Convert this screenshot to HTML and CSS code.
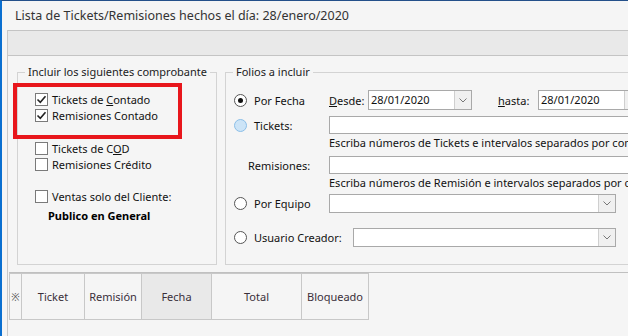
FILE: index.html
```html
<!DOCTYPE html>
<html lang="es">
<head>
  <meta charset="UTF-8">
  <title>Lista de Tickets/Remisiones</title>
  <link rel="stylesheet" href="styles.css">
</head>
<body>

  <div class="ventana">
    <div class="titulo">Lista de Tickets/Remisiones hechos el día: 28/enero/2020</div>

    <div class="panel">
      <div class="barra"></div>

      <div class="filtros">
        <fieldset class="grupo grupo-tipos">
          <legend>Incluir los siguientes comprobante</legend>

          <div class="marcado">
            <div class="check"><span class="caja"><svg viewBox="0 0 13 13" width="13" height="13"><path d="M2.5 6.5l2.8 2.8 5.2-6" fill="none" stroke="#222" stroke-width="1.6"/></svg></span><span>Tickets de <u>C</u>ontado</span></div>
            <div class="check"><span class="caja"><svg viewBox="0 0 13 13" width="13" height="13"><path d="M2.5 6.5l2.8 2.8 5.2-6" fill="none" stroke="#222" stroke-width="1.6"/></svg></span><span>Remisiones Contado</span></div>
          </div>

          <div class="check check-cod"><span class="caja"></span><span>Tickets de C<u>O</u>D</span></div>
          <div class="check"><span class="caja"></span><span>Remisiones Crédito</span></div>

          <div class="check check-cliente"><span class="caja"></span><span>Ventas solo del Cliente:</span></div>
          <div class="cliente">Publico en General</div>
        </fieldset>

        <fieldset class="grupo grupo-folios">
          <legend>Folios a incluir</legend>

          <div class="fila fila-fecha">
            <div class="opcion"><span class="radio activo"></span><span>Por Fecha</span></div>
            <span class="etiqueta"><u>D</u>esde:</span>
            <div class="combo fecha"><span class="valor">28/01/2020</span><span class="boton"><svg viewBox="0 0 8 5" width="8" height="5"><path d="M0.5 0.5l3.5 3.5 3.5-3.5" fill="none" stroke="#777" stroke-width="1"/></svg></span></div>
            <span class="etiqueta etiqueta-hasta"><u>h</u>asta:</span>
            <div class="combo fecha"><span class="valor">28/01/2020</span><span class="boton"><svg viewBox="0 0 8 5" width="8" height="5"><path d="M0.5 0.5l3.5 3.5 3.5-3.5" fill="none" stroke="#777" stroke-width="1"/></svg></span></div>
          </div>

          <div class="fila fila-texto">
            <div class="opcion"><span class="radio hover"></span><span>Tickets:</span></div>
            <div class="caja-texto"></div>
          </div>
          <div class="ayuda">Escriba números de Tickets e intervalos separados por comas</div>

          <div class="fila fila-texto fila-remisiones">
            <div class="opcion opcion-remisiones">Remisiones:</div>
            <div class="caja-texto"></div>
          </div>
          <div class="ayuda">Escriba números de Remisión e intervalos separados por comas</div>

          <div class="fila fila-combo fila-equipo">
            <div class="opcion"><span class="radio"></span><span>Por Equipo</span></div>
            <div class="combo lista"><span class="valor"></span><span class="boton"><svg viewBox="0 0 8 5" width="8" height="5"><path d="M0.5 0.5l3.5 3.5 3.5-3.5" fill="none" stroke="#777" stroke-width="1"/></svg></span></div>
          </div>

          <div class="fila fila-combo fila-usuario">
            <div class="opcion opcion-ancha"><span class="radio"></span><span>Usuario Creador:</span></div>
            <div class="combo lista lista-corta"><span class="valor"></span><span class="boton"><svg viewBox="0 0 8 5" width="8" height="5"><path d="M0.5 0.5l3.5 3.5 3.5-3.5" fill="none" stroke="#777" stroke-width="1"/></svg></span></div>
          </div>
        </fieldset>
      </div>

      <div class="tabla">
        <div class="encabezado">
          <div class="celda col-sel">※</div>
          <div class="celda col-ticket">Ticket</div>
          <div class="celda col-remision">Remisión</div>
          <div class="celda col-fecha">Fecha</div>
          <div class="celda col-total">Total</div>
          <div class="celda col-bloqueado">Bloqueado</div>
        </div>
      </div>
    </div>
  </div>

</body>
</html>
```

FILE: styles.css
```css
body {
  margin: 0;
  padding: 0;
  background-color: #f5f5f5;
  font-family: "Noto Sans", "Open Sans", sans-serif;
  font-size: 11px;
  color: #111;
  overflow: hidden;
}

.ventana {
  height: 336px;
  box-sizing: border-box;
  border-top: 1px solid #24508a;
  border-left: 2px solid #0a6fd0;
  background-color: #f5f5f5;
}

.titulo {
  height: 29px;
  line-height: 29px;
  padding-left: 13px;
  font-size: 12.5px;
  color: #333;
  white-space: nowrap;
}

.panel {
  margin-left: 5px;
  border-left: 1px solid #c8c8c8;
  height: 306px;
}

.barra {
  height: 24px;
  background-color: #e9e9e9;
  border-top: 1px solid #c4c4c4;
  border-bottom: 1px solid #c4c4c4;
}

.filtros {
  display: flex;
  gap: 8px;
  height: 216px;
  box-sizing: border-box;
  padding: 8px 0 0 9px;
  overflow: hidden;
}

.grupo {
  margin: 0;
  padding: 0;
  border: 1px solid #d3d3d3;
  box-sizing: border-box;
  height: 201px;
  flex-shrink: 0;
}

.grupo legend {
  margin-left: 7px;
  padding: 0 3px;
  line-height: 16px;
  color: #222;
  white-space: nowrap;
}

.grupo-tipos {
  width: 200px;
}

.grupo-folios {
  width: 440px;
}

/* casillas */
.marcado {
  margin: 3px 0 0 -5px;
  width: 143px;
  border: 4px solid #e8161c;
  padding: 4px 0 12px 18px;
}

.check {
  display: flex;
  align-items: center;
  height: 16px;
  white-space: nowrap;
}

.grupo-tipos > .check {
  padding-left: 17px;
}

.caja {
  width: 11px;
  height: 11px;
  border: 1px solid #7a7a7a;
  background: white;
  margin-right: 4px;
  position: relative;
  flex-shrink: 0;
}

.caja svg {
  position: absolute;
  left: -1px;
  top: -1px;
}

.check-cod {
  margin-top: 1px;
}

.check-cliente {
  margin-top: 16px;
}

.cliente {
  padding-left: 30px;
  margin-top: 4px;
  line-height: 16px;
  font-weight: bold;
  color: #000;
}

/* folios */
.fila {
  display: flex;
  align-items: center;
  padding-left: 8px;
  white-space: nowrap;
}

.fila-fecha {
  height: 20px;
  margin-top: 10px;
}

.fila-texto {
  height: 18px;
  margin-top: 6px;
}

.fila-remisiones {
  margin-top: 5px;
}

.fila-combo {
  height: 19px;
}

.fila-equipo {
  margin-top: 3px;
}

.fila-usuario {
  margin-top: 15px;
}

.opcion {
  display: flex;
  align-items: center;
  width: 95px;
  flex-shrink: 0;
}

.opcion-ancha {
  width: 119px;
}

.opcion-remisiones {
  padding-left: 14px;
  width: 81px;
}

.radio {
  width: 11px;
  height: 11px;
  border: 1px solid #555;
  border-radius: 50%;
  background: white;
  margin-right: 7px;
  position: relative;
  flex-shrink: 0;
}

.radio.activo::after {
  content: "";
  position: absolute;
  left: 3px;
  top: 3px;
  width: 5px;
  height: 5px;
  border-radius: 50%;
  background: #111;
}

.radio.hover {
  background: #cce4f7;
  border-color: #8cbfe8;
}

.etiqueta {
  width: 39px;
}

.etiqueta-hasta {
  margin-left: 26px;
  width: 40px;
}

.combo {
  display: flex;
  height: 100%;
  box-sizing: border-box;
  border: 1px solid #a9a9a9;
  background: white;
  flex-shrink: 0;
}

.combo .valor {
  flex: 1;
  padding-left: 2px;
  line-height: 18px;
}

.combo .boton {
  width: 16px;
  display: flex;
  align-items: center;
  justify-content: center;
  background: #f0f0f0;
  border-left: 1px solid #cfcfcf;
}

.fecha {
  width: 104px;
}

.lista {
  width: 287px;
}

.lista-corta {
  width: 263px;
}

.caja-texto {
  width: 320px;
  height: 100%;
  box-sizing: border-box;
  border: 1px solid #a9a9a9;
  background: white;
  flex-shrink: 0;
}

.ayuda {
  padding-left: 103px;
  line-height: 16px;
  height: 16px;
  margin-top: 1px;
  white-space: nowrap;
}

/* tabla */
.tabla {
  border-top: 1px solid #c0c0c0;
  margin-left: 1px;
  height: 63px;
}

.encabezado {
  display: flex;
  height: 47px;
}

.celda {
  box-sizing: border-box;
  border-left: 1px solid #c8c8c8;
  border-top: 1px solid #c8c8c8;
  border-bottom: 1px solid #c8c8c8;
  display: flex;
  align-items: center;
  justify-content: center;
  color: #3a2f3a;
}

.col-sel { width: 12px; font-size: 10px; color: #555; }
.col-ticket { width: 63px; }
.col-remision { width: 57px; }
.col-fecha { width: 70px; background: #e9e9e9; }
.col-total { width: 90px; }
.col-bloqueado { width: 68px; border-right: 1px solid #c8c8c8; }
```
